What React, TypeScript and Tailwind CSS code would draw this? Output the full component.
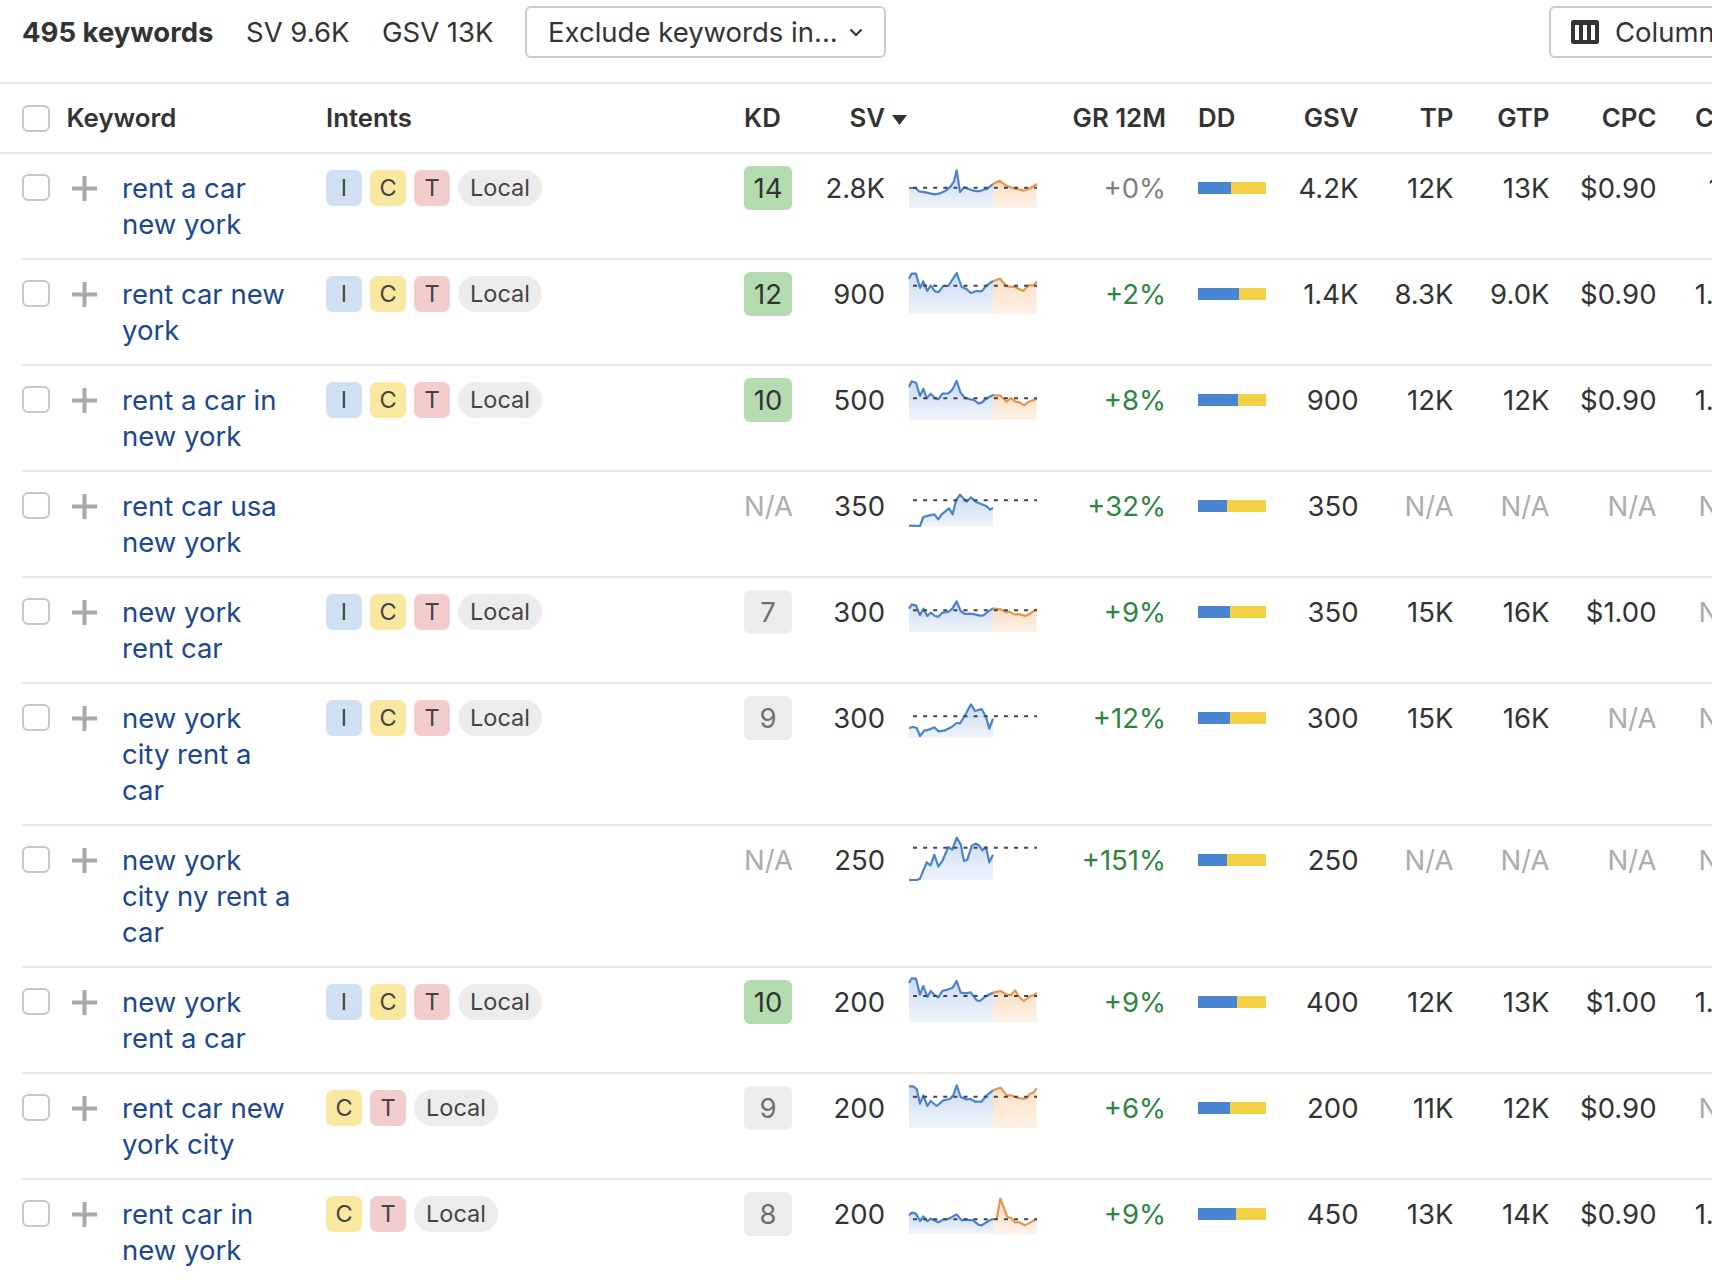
const grid =
  "grid grid-cols-[49px_51px_204px_418px_48px_93px_152px_129px_100px_92.5px_95px_96px_107px_91px] w-[1725px] ml-[22px]";

type Row = {
  kw: string;
  intents: string[];
  kd: string;
  sv: string;
  bottom: number;
  dash: number;
  blue: string;
  orange?: string;
  gr: string;
  dd: number;
  gsv: string;
  tp: string;
  gtp: string;
  cpc: string;
  cps: string;
};

const rows: Row[] = [
  {
    kw: "rent a car new york", intents: ["I", "C", "T"], kd: "14", sv: "2.8K", bottom: 173, dash: 112,
    blue: "87,113 107,113 117,123 137,126 162,132 177,130 197,121 212,108 222,93 230,60 240,125 252,111 277,120 297,123 322,115 339,101",
    orange: "339,101 359,91 377,105 397,113 432,121 452,113 470,101",
    gr: "+0%", dd: 33, gsv: "4.2K", tp: "12K", gtp: "13K", cpc: "$0.90", cps: "1.11",
  },
  {
    kw: "rent car new york", intents: ["I", "C", "T"], kd: "12", sv: "900", bottom: 491, dash: 406,
    blue: "87,385 95,370 108,370 120,413 130,393 142,422 152,405 165,423 175,426 190,407 205,407 230,368 245,410 258,415 272,428 290,422 305,423 320,405 339,392",
    orange: "339,392 360,385 380,408 405,410 430,422 445,405 462,405 470,393",
    gr: "+2%", dd: 41, gsv: "1.4K", tp: "8.3K", gtp: "9.0K", cpc: "$0.90", cps: "1.09",
  },
  {
    kw: "rent a car in new york", intents: ["I", "C", "T"], kd: "10", sv: "500", bottom: 149, dash: 84,
    blue: "87,50 95,33 108,37 120,77 130,55 140,84 152,70 165,84 175,87 187,70 205,69 217,58 230,32 242,68 255,82 270,87 280,88 295,99 305,97 318,85 339,74",
    orange: "339,74 362,76 380,94 393,83 405,93 420,97 432,105 445,95 470,85",
    gr: "+8%", dd: 40, gsv: "900", tp: "12K", gtp: "12K", cpc: "$0.90", cps: "1.09",
  },
  {
    kw: "rent car usa new york", intents: [], kd: "N/A", sv: "350", bottom: 467, dash: 390,
    blue: "87,466 120,467 130,440 145,436 163,432 175,447 185,432 207,414 218,432 228,390 240,373 260,394 273,381 290,396 320,408 330,418 339,413",
    gr: "+32%", dd: 29, gsv: "350", tp: "N/A", gtp: "N/A", cpc: "N/A", cps: "N/A",
  },
  {
    kw: "new york rent car", intents: ["I", "C", "T"], kd: "7", sv: "300", bottom: 125, dash: 60,
    blue: "87,55 95,43 108,45 120,74 130,55 142,77 152,67 165,77 175,79 187,67 205,65 217,55 230,33 242,62 255,71 270,70 285,72 300,76 310,75 325,63 339,54",
    orange: "339,54 362,57 380,67 388,64 403,72 420,72 435,77 450,70 470,56",
    gr: "+9%", dd: 32, gsv: "350", tp: "15K", gtp: "16K", cpc: "$1.00", cps: "N/A",
  },
  {
    kw: "new york city rent a car", intents: ["I", "C", "T"], kd: "9", sv: "300", bottom: 443, dash: 378,
    blue: "87,413 100,410 110,413 120,437 133,421 150,417 163,411 175,423 195,420 215,410 230,398 240,399 255,375 273,342 285,362 305,356 318,380 328,415 339,385",
    gr: "+12%", dd: 32, gsv: "300", tp: "15K", gtp: "16K", cpc: "N/A", cps: "N/A",
  },
  {
    kw: "new york city ny rent a car", intents: [], kd: "N/A", sv: "250", bottom: 869, dash: 772,
    blue: "87,869 110,869 120,865 140,816 152,825 163,793 175,829 187,812 205,770 217,778 230,742 242,762 252,812 262,808 275,767 287,760 297,765 307,780 318,770 328,816 339,793",
    gr: "+151%", dd: 29, gsv: "250", tp: "N/A", gtp: "N/A", cpc: "N/A", cps: "N/A",
  },
  {
    kw: "new york rent a car", intents: ["I", "C", "T"], kd: "10", sv: "200", bottom: 185, dash: 107,
    blue: "87,68 95,54 108,55 120,103 130,77 142,110 152,92 165,105 175,111 187,92 205,87 218,82 230,62 242,97 258,99 272,96 290,120 300,122 318,107 339,97",
    orange: "339,97 362,92 382,104 393,104 405,90 420,113 432,122 450,107 462,105 470,97",
    gr: "+9%", dd: 39, gsv: "400", tp: "12K", gtp: "13K", cpc: "$1.00", cps: "1.09",
  },
  {
    kw: "rent car new york city", intents: ["C", "T"], kd: "9", sv: "200", bottom: 503, dash: 409,
    blue: "87,378 100,378 110,386 120,430 130,405 142,437 152,422 170,437 190,420 210,416 220,405 230,375 242,410 258,417 272,416 285,424 305,424 318,407 339,390",
    orange: "339,390 362,382 380,405 393,405 405,410 425,415 438,415 450,400 460,397 470,384",
    gr: "+6%", dd: 32, gsv: "200", tp: "11K", gtp: "12K", cpc: "$0.90", cps: "N/A",
  },
  {
    kw: "rent car in new york", intents: ["C", "T"], kd: "8", sv: "200", bottom: 821, dash: 777,
    blue: "87,765 95,757 108,760 120,782 130,768 142,783 152,775 175,786 190,777 205,776 230,762 245,780 258,778 280,780 295,793 305,795 325,782 339,776",
    orange: "339,776 350,776 361,715 382,770 393,773 405,787 415,785 435,795 450,787 470,776",
    gr: "+9%", dd: 38, gsv: "450", tp: "13K", gtp: "14K", cpc: "$0.90", cps: "1.09",
  },
];

const intentColors: Record<string, string> = {
  I: "bg-[#cfe0f3]",
  C: "bg-[#f9e9a0]",
  T: "bg-[#f3cccc]",
};

const Checkbox = () => (
  <div className="w-[28px] h-[27px] rounded-[6px] border-2 border-[#c8c8c8] bg-white" />
);

const Num = ({ value }: { value: string }) => (
  <div className={`pt-4 text-right ${value === "N/A" ? "text-[#adadad]" : "text-[#333333]"}`}>{value}</div>
);

const Spark = ({ row, id }: { row: Row; id: number }) => {
  const area = (pts: string) => {
    const list = pts.split(" ");
    return `${list[0].split(",")[0]},${row.bottom} ${pts} ${list[list.length - 1].split(",")[0]},${row.bottom}`;
  };
  return (
    <svg width="128" height="46" viewBox={`87 ${row.bottom - 138} 384 138`} fill="none" className="overflow-visible">
      <defs>
        <linearGradient id={`b${id}`} x1="0" y1="0" x2="0" y2="1">
          <stop offset="0" stopColor="#cbdcf2" />
          <stop offset="1" stopColor="#eff4fb" />
        </linearGradient>
        <linearGradient id={`o${id}`} x1="0" y1="0" x2="0" y2="1">
          <stop offset="0" stopColor="#fbdfc6" />
          <stop offset="1" stopColor="#fdf2e7" />
        </linearGradient>
      </defs>
      <polygon points={area(row.blue)} fill={`url(#b${id})`} />
      {row.orange && <polygon points={area(row.orange)} fill={`url(#o${id})`} />}
      <polyline points={row.blue} stroke="#4a82cc" strokeWidth="6.5" strokeLinejoin="round" />
      {row.orange && <polyline points={row.orange} stroke="#e8944a" strokeWidth="6.5" strokeLinejoin="round" />}
      <line x1="99" x2="471" y1={row.dash} y2={row.dash} stroke="#444444" strokeWidth="6" strokeDasharray="12 18.3" />
    </svg>
  );
};

export default function App() {
  return (
    <div className="w-[1712px] h-[1280px] overflow-hidden bg-white font-['Inter',sans-serif] text-[27.5px] leading-[36px] text-[#333333]">
      <div className="h-[84px] border-b-2 border-[#e9e9e9] pt-[6px] pl-[22px] flex items-start">
        <div className="h-[52px] flex items-center font-bold w-[224px] shrink-0 whitespace-nowrap">495 keywords</div>
        <div className="h-[52px] flex items-center w-[136px] shrink-0 whitespace-nowrap">SV 9.6K</div>
        <div className="h-[52px] flex items-center w-[143px] shrink-0 whitespace-nowrap">GSV 13K</div>
        <div className="h-[52px] w-[361px] shrink-0 border-2 border-[#cccccc] rounded-[6px] flex items-center pl-[21px]">
          <span className="whitespace-nowrap">Exclude keywords in...</span>
          <svg width="14" height="9" viewBox="0 0 14 9" fill="none" className="ml-[11px]">
            <path d="M1.5 1.5 7 7l5.5-5.5" stroke="#333333" strokeWidth="2" />
          </svg>
        </div>
        <div className="ml-auto mr-[-37px] h-[52px] w-[200px] shrink-0 border-2 border-[#cccccc] rounded-[6px] flex items-center pl-[20px]">
          <svg width="28" height="24" viewBox="0 0 28 24" className="shrink-0">
            <rect width="28" height="24" rx="2.5" fill="#333333" />
            <rect x="4" y="5" width="4" height="15" fill="white" />
            <rect x="12" y="5" width="4" height="15" fill="white" />
            <rect x="20" y="5" width="4" height="15" fill="white" />
          </svg>
          <span className="ml-[16px] whitespace-nowrap">Columns</span>
        </div>
      </div>

      <div className="h-[70px] border-b-2 border-[#e9e9e9]">
        <div className={`${grid} h-[68px] items-center font-semibold text-[25.8px]`}>
          <div className="col-span-3 flex items-center gap-[16.5px]">
            <Checkbox />
            <span>Keyword</span>
          </div>
          <div>Intents</div>
          <div className="whitespace-nowrap">KD</div>
          <div className="text-right">SV</div>
          <div className="pl-[7px]">
            <svg width="15" height="10" viewBox="0 0 15 10" className="mt-[4px]">
              <path d="M0 0h15L7.5 10z" fill="#333333" />
            </svg>
          </div>
          <div className="text-right whitespace-nowrap">GR 12M</div>
          <div className="pl-[32px]">DD</div>
          <div className="text-right">GSV</div>
          <div className="text-right">TP</div>
          <div className="text-right">GTP</div>
          <div className="text-right">CPC</div>
          <div className="text-right">CPS</div>
        </div>
      </div>

      {rows.map((row, i) => (
        <div key={i} className={`${grid} border-b-2 border-[#e9e9e9]`}>
          <div className="pt-5">
            <Checkbox />
          </div>
          <div className="pt-[22px] pl-px">
            <svg width="25" height="25" viewBox="0 0 25 25">
              <path d="M12.5 0v25M0 12.5h25" stroke="#a9a9a9" strokeWidth="4" />
            </svg>
          </div>
          <div className="py-4 w-[170px] text-[#1c4790]">{row.kw}</div>
          <div className="pt-4 flex items-start gap-2 text-[23.5px]">
            {row.intents.map((t) => (
              <div key={t} className={`w-9 h-9 rounded-[7px] flex items-center justify-center text-[#444444] ${intentColors[t]}`}>
                {t}
              </div>
            ))}
            {row.intents.length > 0 && (
              <div className="h-9 px-3 rounded-[18px] bg-[#ececec] flex items-center text-[#444444]">Local</div>
            )}
          </div>
          <div>
            {row.kd === "N/A" ? (
              <div className="pt-4 text-[#adadad] whitespace-nowrap">N/A</div>
            ) : (
              <div
                className={`mt-3 w-12 h-[44px] rounded-[6px] flex items-center justify-center ${
                  Number(row.kd) >= 10 ? "bg-[#b5dcb0] text-[#333333]" : "bg-[#ececec] text-[#707070]"
                }`}
              >
                {row.kd}
              </div>
            )}
          </div>
          <Num value={row.sv} />
          <div className="pt-2 pl-6">
            <Spark row={row} id={i} />
          </div>
          <div className={`pt-4 text-right ${row.gr === "+0%" ? "text-[#808080]" : "text-[#2e8540]"}`}>{row.gr}</div>
          <div className="pt-7 pl-[32px]">
            <div className="w-[68px] h-3 flex bg-[#f3d046]">
              <div className="h-3 bg-[#4a85d1]" style={{ width: row.dd }} />
            </div>
          </div>
          <Num value={row.gsv} />
          <Num value={row.tp} />
          <Num value={row.gtp} />
          <Num value={row.cpc} />
          <Num value={row.cps} />
        </div>
      ))}
    </div>
  );
}
